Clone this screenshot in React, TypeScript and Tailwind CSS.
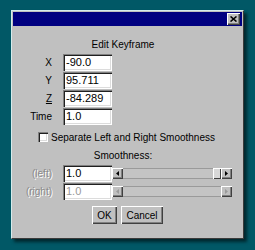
import React from "react";

const raised =
  "bg-[#c0c0c0] shadow-[inset_1px_1px_0_#ffffff,inset_-1px_-1px_0_#404040,inset_-2px_-2px_0_#808080]";
const sunken =
  "bg-white shadow-[inset_1px_1px_0_#808080,inset_2px_2px_0_#202020,inset_-1px_-1px_0_#ffffff,inset_-2px_-2px_0_#dcdcdc]";

function Field({ value, disabled }: { value: string; disabled?: boolean }) {
  return (
    <div
      className={`${sunken} flex h-[17px] w-[49px] items-center pl-[3px] text-[11px] ${
        disabled ? "text-[#9a9a9a]" : "text-black"
      }`}
    >
      {value}
    </div>
  );
}

function Arrow({ dir, disabled }: { dir: "left" | "right"; disabled?: boolean }) {
  return (
    <div className={`${raised} flex h-[11px] w-[11px] items-center justify-center`}>
      <svg width="3" height="5" viewBox="0 0 3 5">
        {dir === "left" ? (
          <path d="M3 0 L0 2.5 L3 5 Z" fill={disabled ? "#9a9a9a" : "#000"} />
        ) : (
          <path d="M0 0 L3 2.5 L0 5 Z" fill={disabled ? "#9a9a9a" : "#000"} />
        )}
      </svg>
    </div>
  );
}

function Slider({ disabled }: { disabled?: boolean }) {
  return (
    <div className="flex h-[11px] w-[120px] items-stretch">
      <Arrow dir="left" disabled={disabled} />
      <div className="flex-1 border-y border-[#9a9a9a] bg-[#c4c4c4]" />
      {!disabled && (
        <div className="h-[11px] w-[8px] bg-[#d8d8d8] shadow-[inset_1px_1px_0_#ffffff,inset_-1px_-1px_0_#404040]" />
      )}
      <Arrow dir="right" disabled={disabled} />
    </div>
  );
}

function Row({ label, value, underline }: { label: string; value: string; underline?: boolean }) {
  return (
    <div className="flex h-[17px] items-center">
      <div className="w-[39px] text-right text-[10px] text-black">
        {underline ? <span className="underline">{label}</span> : label}
      </div>
      <div className="ml-[11px]">
        <Field value={value} />
      </div>
    </div>
  );
}

function DisabledLabel({ children }: { children: React.ReactNode }) {
  return (
    <div className="w-[39px] text-right text-[10px] text-[#8a8a8a] [text-shadow:1px_1px_0_#ffffff]">
      {children}
    </div>
  );
}

export default function App() {
  return (
    <div
      className="h-[250px] w-[255px] bg-[#015866] pl-[11px] pt-[10px]"
      style={{ fontFamily: '"Liberation Sans", Arial, sans-serif' }}
    >
      <div className="h-[229px] w-[233px] border border-t-[#d4ecec] border-l-[#d4ecec] border-r-[#3a3a3a] border-b-[#3a3a3a] bg-[#c0c0c0] p-[1px] shadow-[3px_3px_3px_rgba(0,0,0,0.55)]">
        {/* Title bar */}
        <div className="flex h-[14px] items-start justify-end bg-[#000080] pr-[2px] pt-[1px]">
          <div className={`${raised} flex h-[12px] w-[13px] items-center justify-center`}>
            <svg width="7" height="6" viewBox="0 0 7 6">
              <path d="M0.5 0.5 L6.5 5.5 M6.5 0.5 L0.5 5.5" stroke="#000" strokeWidth="1.6" />
            </svg>
          </div>
        </div>

        <div className="pr-[9px]">
          <div className="mt-[13px] text-center text-[10px] leading-[12px] text-black">Edit Keyframe</div>

          <div className="mt-[3px] flex flex-col gap-[1px]">
            <Row label="X" value="-90.0" />
            <Row label="Y" value="95.711" />
            <Row label="Z" value="-84.289" underline />
            <Row label="Time" value="1.0" />
          </div>

          <div className="mt-[6px] flex h-[12px] items-center pl-[25px]">
            <div className={`${sunken} h-[10px] w-[10px]`} />
            <span className="ml-[3px] text-[10px] text-black">Separate Left and Right Smoothness</span>
          </div>

          <div className="mt-[7px] text-center text-[10px] leading-[12px] text-black">Smoothness:</div>

          <div className="mt-[3px] flex flex-col gap-[1px]">
            <div className="flex h-[17px] items-center">
              <DisabledLabel>(left)</DisabledLabel>
              <div className="ml-[11px] flex items-center">
                <Field value="1.0" />
                <Slider />
              </div>
            </div>
            <div className="flex h-[17px] items-center">
              <DisabledLabel>(right)</DisabledLabel>
              <div className="ml-[11px] flex items-center">
                <Field value="1.0" disabled />
                <Slider disabled />
              </div>
            </div>
          </div>
        </div>

        <div className="mt-[6px] flex justify-center gap-[4px]">
          <button className={`${raised} h-[18px] w-[25px] text-[10px] text-black`}>OK</button>
          <button className={`${raised} h-[18px] w-[42px] text-[10px] text-black`}>Cancel</button>
        </div>
      </div>
    </div>
  );
}
